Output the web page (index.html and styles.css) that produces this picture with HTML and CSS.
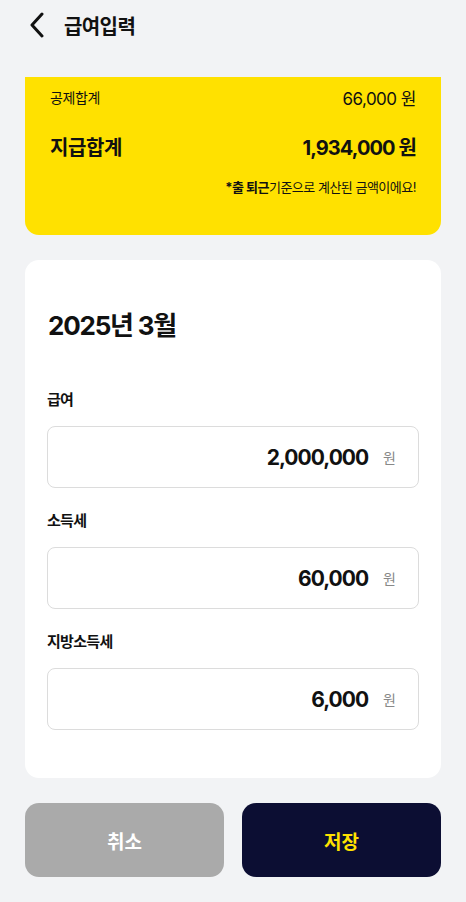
FILE: index.html
```html
<!DOCTYPE html>
<html lang="ko">
<head>
    <meta charset="UTF-8">
    <meta name="viewport" content="width=device-width, initial-scale=1.0">
    <title>급여입력</title>
    <link rel="stylesheet" href="styles.css">
</head>
<body>
    <div class="page">
        <header class="top-bar">
            <button class="back-btn" aria-label="뒤로">
                <svg width="18" height="26" viewBox="0 0 18 26">
                    <path d="M14 2 L4 13 L14 24" fill="none" stroke="#111" stroke-width="3" stroke-linecap="round" stroke-linejoin="round"/>
                </svg>
            </button>
            <h1>급여입력</h1>
        </header>

        <section class="summary-card">
            <div class="summary-row">
                <span>공제합계</span>
                <span class="amount">66,000 원</span>
            </div>
            <div class="summary-row total">
                <span>지급합계</span>
                <span class="amount">1,934,000 원</span>
            </div>
            <p class="summary-note"><b>*출 퇴근</b>기준으로 계산된 금액이에요!</p>
        </section>

        <section class="form-card">
            <h2>2025년 3월</h2>

            <label class="field-label">급여</label>
            <div class="field">
                <span class="field-value">2,000,000</span>
                <span class="field-unit">원</span>
            </div>

            <label class="field-label">소득세</label>
            <div class="field">
                <span class="field-value">60,000</span>
                <span class="field-unit">원</span>
            </div>

            <label class="field-label">지방소득세</label>
            <div class="field">
                <span class="field-value">6,000</span>
                <span class="field-unit">원</span>
            </div>
        </section>

        <div class="actions">
            <button class="btn btn-cancel">취소</button>
            <button class="btn btn-save">저장</button>
        </div>
    </div>
</body>
</html>
```

FILE: styles.css
```css
* {
    box-sizing: border-box;
}

body {
    font-family: Inter, "Noto Sans CJK KR", sans-serif;
    margin: 0;
    padding: 0;
    background-color: #f2f3f5;
    color: #111;
}

.page {
    padding: 0 25px;
}

.top-bar {
    display: flex;
    align-items: center;
    height: 50px;
    margin-bottom: 27px;
}

.back-btn {
    border: none;
    background: none;
    padding: 0;
    margin-left: 3px;
    width: 18px;
    height: 26px;
    display: flex;
}

.top-bar h1 {
    font-size: 20px;
    font-weight: 600;
    margin: 0 0 0 18px;
    letter-spacing: -0.6px;
}

.summary-card {
    background-color: #ffe100;
    border-radius: 0 0 14px 14px;
    padding: 8px 25px 0;
    height: 158px;
}

.summary-row {
    display: flex;
    justify-content: space-between;
    align-items: center;
    font-size: 14px;
    height: 24px;
    letter-spacing: -0.4px;
}

.summary-row .amount {
    font-size: 17px;
    letter-spacing: -0.5px;
}

.summary-row.total {
    font-size: 20px;
    font-weight: 700;
    margin-top: 23px;
    height: 28px;
}

.summary-row.total .amount {
    font-size: 20px;
    letter-spacing: -0.9px;
}

.summary-note {
    text-align: right;
    font-size: 13px;
    margin: 17px 0 0;
    letter-spacing: -0.5px;
}

.form-card {
    background-color: #fff;
    border-radius: 14px;
    margin-top: 25px;
    padding: 46px 22px 48px;
}

.form-card h2 {
    font-size: 26px;
    font-weight: 700;
    margin: 0 0 42px 1px;
    letter-spacing: -1.2px;
    line-height: 40px;
}

.field-label {
    display: block;
    font-size: 15px;
    font-weight: 600;
    letter-spacing: -0.7px;
    line-height: 24px;
    margin-bottom: 14px;
}

.field {
    display: flex;
    justify-content: flex-end;
    align-items: center;
    height: 62px;
    border: 1.5px solid #dcdcdc;
    border-radius: 8px;
    padding: 0 22px;
    margin-bottom: 21px;
}

.field:last-child {
    margin-bottom: 0;
}

.field-value {
    font-size: 21px;
    font-weight: 700;
    letter-spacing: -1px;
}

.field-unit {
    font-size: 14px;
    color: #888;
    margin-left: 15px;
}

.actions {
    display: flex;
    gap: 18px;
    margin-top: 25px;
}

.btn {
    flex: 1;
    height: 74px;
    border: none;
    border-radius: 14px;
    font-family: inherit;
    font-size: 19px;
    font-weight: 700;
}

.btn-cancel {
    background-color: #aaaaaa;
    color: #fff;
}

.btn-save {
    background-color: #0c0e33;
    color: #ffe100;
}
```
